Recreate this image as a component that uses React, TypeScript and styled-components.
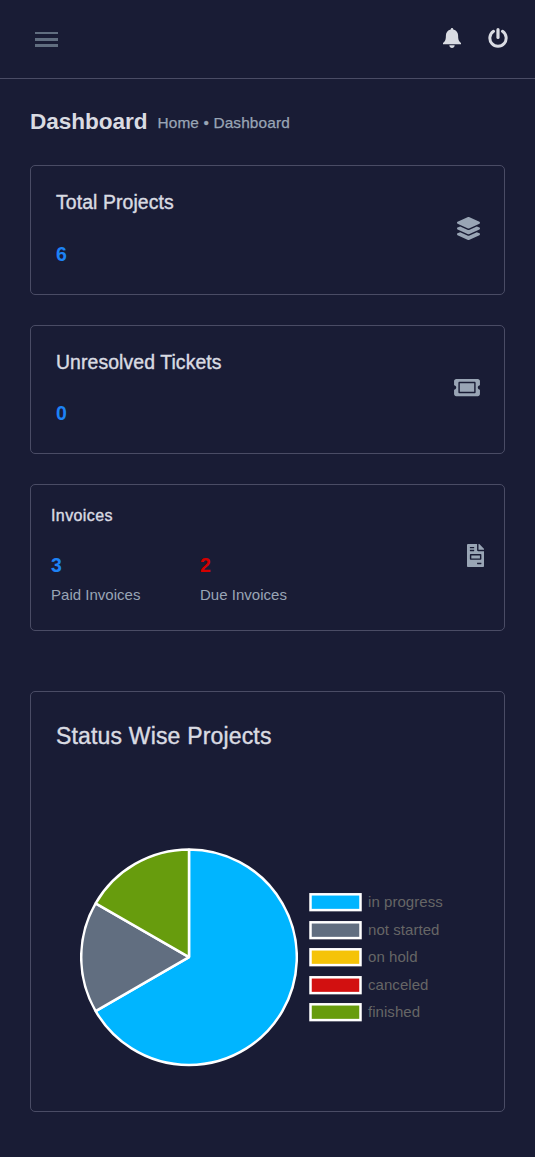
import React from "react";
import styled, { createGlobalStyle } from "styled-components";
import { FaLayerGroup, FaTicketAlt, FaFileInvoice } from "react-icons/fa";

const GlobalStyle = createGlobalStyle`
  * { box-sizing: border-box; }
  body {
    margin: 0;
    background: #191c35;
    color: #d9dbe2;
    font-family: "Liberation Sans", Arial, sans-serif;
  }
  svg { display: block; flex: none; }
`;

const Page = styled.div`
  min-height: 1157px;
`;

const Header = styled.header`
  display: flex;
  align-items: center;
  justify-content: space-between;
  height: 79px;
  padding: 0 27px 3px 35px;
  border-bottom: 1px solid #4a4c65;
`;

const MenuButton = styled.button`
  display: flex;
  padding: 3px 0 0;
  border: 0;
  background: none;
`;

const HeaderActions = styled.div`
  display: flex;
  align-items: center;
  gap: 27px;
  color: #d9dbe2;
`;

const Main = styled.main`
  padding: 0 30px;
`;

const TitleBar = styled.div`
  display: flex;
  align-items: center;
  height: 86px;
`;

const PageTitle = styled.h1`
  margin: 0 10px 0 0;
  font-size: 22.6px;
  font-weight: 700;
  line-height: 28px;
  letter-spacing: -0.06px;
  white-space: nowrap;
`;

const Breadcrumb = styled.nav`
  padding-top: 2px;
  font-size: 15.4px;
  line-height: 20px;
  letter-spacing: 0.13px;
  color: #99a5b5;
  -webkit-text-stroke: 0.25px #99a5b5;
  white-space: nowrap;
`;

const Card = styled.section<{ $height: number; $left?: number; $right?: number; $gap?: number }>`
  display: flex;
  align-items: center;
  justify-content: space-between;
  height: ${(p) => p.$height}px;
  margin-bottom: ${(p) => p.$gap ?? 30}px;
  padding: 0 ${(p) => p.$right ?? 24}px 0 ${(p) => p.$left ?? 25}px;
  border: 1px solid #4a4c65;
  border-radius: 5px;
`;

const CardBody = styled.div<{ $top: number }>`
  align-self: flex-start;
  padding-top: ${(p) => p.$top}px;
`;

const CardTitle = styled.h4<{ $size: number; $spacing?: number }>`
  margin: 0;
  font-size: ${(p) => p.$size}px;
  font-weight: 400;
  line-height: 24px;
  letter-spacing: ${(p) => p.$spacing ?? 0}px;
  -webkit-text-stroke: 0.4px #d9dbe2;
  white-space: nowrap;
`;

const Figure = styled.p<{ $color: string; $top: number }>`
  margin: ${(p) => p.$top}px 0 0;
  font-size: 19.5px;
  font-weight: 700;
  line-height: 24px;
  color: ${(p) => p.$color};
`;

const CardIcon = styled.div<{ $lift?: number }>`
  display: flex;
  padding-bottom: ${(p) => p.$lift ?? 4}px;
  color: #99a5b5;
`;

const InvoiceStats = styled.div`
  display: grid;
  grid-template-columns: 149px auto;
`;

const StatLabel = styled.p`
  margin: 7px 0 0;
  font-size: 15px;
  line-height: 22px;
  letter-spacing: 0.02px;
  color: #99a5b5;
  white-space: nowrap;
`;

const ChartCard = styled.section`
  height: 421px;
  padding: 30px 25px 0;
  border: 1px solid #4a4c65;
  border-radius: 5px;
`;

const ChartTitle = styled.h3`
  margin: 0;
  font-size: 23px;
  font-weight: 400;
  line-height: 28px;
  letter-spacing: 0.17px;
  -webkit-text-stroke: 0.4px #d9dbe2;
`;

const ChartArea = styled.div`
  display: flex;
  align-items: center;
  gap: 11px;
  padding: 98px 0 0 24px;
`;

const Legend = styled.ul`
  margin: 0;
  padding: 0;
  list-style: none;
`;

const LegendItem = styled.li`
  display: flex;
  align-items: center;
  gap: 6px;
  height: 27.5px;
  font-size: 15px;
  letter-spacing: 0.05px;
  color: #666;
`;

const LegendLabel = styled.span`
  padding-bottom: 2px;
`;

const STATUSES = [
  { label: "in progress", count: 4, color: "#00b5ff" },
  { label: "not started", count: 1, color: "#616e80" },
  { label: "on hold", count: 0, color: "#f5c308" },
  { label: "canceled", count: 0, color: "#d21010" },
  { label: "finished", count: 1, color: "#679c0d" },
];

const CENTER_X = 109;
const CENTER_Y = 109.2;
const RADIUS = 107.8;

function Pie() {
  const total = STATUSES.reduce((sum, s) => sum + s.count, 0);
  let start = 0;
  const point = (fraction: number) => {
    const a = fraction * 2 * Math.PI - Math.PI / 2;
    return `${CENTER_X + RADIUS * Math.cos(a)} ${CENTER_Y + RADIUS * Math.sin(a)}`;
  };
  return (
    <svg width="218" height="219" viewBox="0 0 218 219">
      {STATUSES.filter((s) => s.count > 0).map((s) => {
        const end = start + s.count / total;
        const large = end - start > 0.5 ? 1 : 0;
        const d = `M${CENTER_X} ${CENTER_Y}L${point(start)}A${RADIUS} ${RADIUS} 0 ${large} 1 ${point(end)}Z`;
        start = end;
        return <path key={s.label} d={d} fill={s.color} stroke="#fff" strokeWidth="2.5" strokeLinejoin="bevel" />;
      })}
    </svg>
  );
}

function BellIcon() {
  return (
    <svg width="18" height="20" viewBox="0 0 18 20" fill="currentColor">
      <path d="M9 0c-.8 0-1.3.6-1.3 1.5C4.600 2.200 2.900 4.600 2.900 7.600c0 3.400-.5 5-1.600 6.100L0 15v1.200h18V15l-1.300-1.300c-1.100-1.100-1.600-2.700-1.600-6.100 0-3-1.700-5.400-4.800-6.100C10.300.6 9.800 0 9 0Z" />
      <path d="M6.300 17.300h5.400C11.500 19 10.400 20 9 20s-2.500-1-2.700-2.700Z" />
    </svg>
  );
}

function PowerIcon() {
  return (
    <svg width="20" height="20" viewBox="0 0 20 20" fill="none" stroke="currentColor" strokeLinecap="round">
      <path d="M5.500 3.300A8.150 8.150 0 1 0 14.500 3.300" strokeWidth="3" />
      <path d="M10 1.700V9.500" strokeWidth="3.200" />
    </svg>
  );
}

function StatCard({ title, value, icon, height, offset }: {
  title: string; value: number; icon: React.ReactNode; height: number; offset: number;
}) {
  return (
    <Card $height={height}>
      <CardBody $top={24}>
        <CardTitle $size={19.4} $spacing={0.1}>{title}</CardTitle>
        <Figure $color="#1d82f5" $top={offset}>{value}</Figure>
      </CardBody>
      <CardIcon>{icon}</CardIcon>
    </Card>
  );
}

export default function App() {
  return (
    <Page>
      <GlobalStyle />
      <Header>
        <MenuButton aria-label="Menu">
          <svg width="23" height="15" viewBox="0 0 23 15" fill="#616e80">
            <rect width="23" height="2" />
            <rect y="6" width="23" height="3" />
            <rect y="12" width="23" height="3" />
          </svg>
        </MenuButton>
        <HeaderActions>
          <BellIcon />
          <PowerIcon />
        </HeaderActions>
      </Header>
      <Main>
        <TitleBar>
          <PageTitle>Dashboard</PageTitle>
          <Breadcrumb>Home • Dashboard</Breadcrumb>
        </TitleBar>
        <StatCard title="Total Projects" value={6} height={130} offset={28} icon={<FaLayerGroup size={23} />} />
        <StatCard title="Unresolved Tickets" value={0} height={129} offset={27} icon={<FaTicketAlt size={23} style={{ width: 26 }} />} />
        <Card $height={147} $left={20} $right={20} $gap={60}>
          <CardBody $top={19}>
            <CardTitle $size={16} $spacing={0.4}>Invoices</CardTitle>
            <InvoiceStats>
              <div>
                <Figure $color="#1d82f5" $top={25}>3</Figure>
                <StatLabel>Paid Invoices</StatLabel>
              </div>
              <div>
                <Figure $color="#d30000" $top={25}>2</Figure>
                <StatLabel>Due Invoices</StatLabel>
              </div>
            </InvoiceStats>
          </CardBody>
          <CardIcon $lift={5}><FaFileInvoice size={23} style={{ width: 17.25 }} /></CardIcon>
        </Card>
        <ChartCard>
          <ChartTitle>Status Wise Projects</ChartTitle>
          <ChartArea>
            <Pie />
            <Legend>
              {STATUSES.map((s) => (
                <LegendItem key={s.label}>
                  <svg width="53" height="19" viewBox="0 0 53 19">
                    <rect x="1.5" y="1.3" width="50" height="15.8" fill={s.color} stroke="#fff" strokeWidth="2.5" />
                  </svg>
                  <LegendLabel>{s.label}</LegendLabel>
                </LegendItem>
              ))}
            </Legend>
          </ChartArea>
        </ChartCard>
      </Main>
    </Page>
  );
}
